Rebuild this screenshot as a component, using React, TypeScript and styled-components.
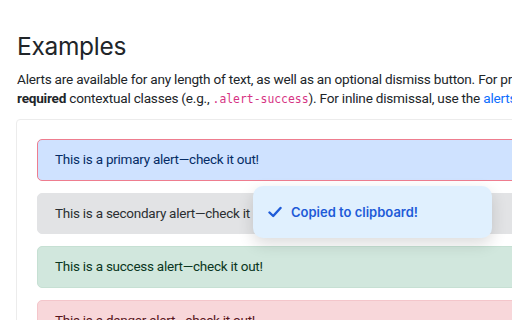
import React from 'react';
import styled, { createGlobalStyle } from 'styled-components';

const Global = createGlobalStyle`
  html, body {
    margin: 0;
    padding: 0;
    background: #ffffff;
    overflow: hidden;
    width: 512px;
    height: 320px;
  }
  body {
    font-family: Roboto, "Liberation Sans", sans-serif;
    color: #212529;
  }
`;

const Page = styled.div({
    width: '760px',
    padding: '30px 0 0 17px',
    boxSizing: 'border-box',
});

const Title = styled.h2({
    fontFamily: 'Inter, Roboto, sans-serif',
    fontSize: '24.5px',
    fontWeight: 400,
    lineHeight: '32px',
    margin: '0 0 8px 0',
    letterSpacing: '-0.3px',
});

const Lead = styled.p({
    fontSize: '13.6px',
    letterSpacing: '-0.22px',
    lineHeight: '19px',
    margin: '0 0 10px 0',
});

const Line = styled.span({
    display: 'block',
    whiteSpace: 'nowrap',
});

const Code = styled.code({
    fontFamily: '"DejaVu Sans Mono", "Liberation Mono", monospace',
    fontSize: '11.4px',
    letterSpacing: '0',
    color: '#d63384',
});

const Link = styled.a({
    color: '#0d6efd',
    textDecoration: 'none',
});

const Example = styled.div({
    marginLeft: '-1px',
    border: '1px solid #ececec',
    borderRadius: '4px',
    padding: '19px 20px',
    display: 'flex',
    flexDirection: 'column',
    gap: '12px',
    position: 'relative',
});

const tones = {
    primary: { bg: '#cfe2ff', fg: '#052c65', border: '#ee7d8f' },
    secondary: { bg: '#e2e3e5', fg: '#2b2f32', border: '#e2e3e5' },
    success: { bg: '#d1e7dd', fg: '#0a3622', border: '#c6e0d3' },
    danger: { bg: '#f8d7da', fg: '#58151c', border: '#f4c6cb' },
};

type Tone = keyof typeof tones;

const Alert = styled.div<{ $tone: Tone }>`
    background: ${p => tones[p.$tone].bg};
    color: ${p => tones[p.$tone].fg};
    border: 1px solid ${p => tones[p.$tone].border};
    border-radius: 5px;
    padding: 12px 17px;
    font-size: 13.5px;
    letter-spacing: -0.25px;
    line-height: 15.5px;
`;

const Toast = styled.div({
    position: 'absolute',
    left: '236px',
    top: '66px',
    width: '239px',
    height: '52px',
    boxSizing: 'border-box',
    background: '#e0f0fe',
    borderRadius: '10px',
    boxShadow: '0 6px 16px rgba(0, 0, 0, 0.14)',
    display: 'flex',
    alignItems: 'center',
    gap: '9px',
    padding: '0 15px',
    color: '#1e5bd8',
    fontFamily: 'Inter, Roboto, sans-serif',
    fontSize: '13px',
    fontWeight: 600,
});

const Check = () => (
    <svg width="14" height="14" viewBox="0 0 14 14" fill="none">
        <path d="M1.5 7.5 L5.2 11 L12.5 3" stroke="#1e5bd8" strokeWidth="2.4" strokeLinecap="round" strokeLinejoin="round" />
    </svg>
);

const App: React.FC = () => {
  return (
    <Page>
        <Global />
        <Title>Examples</Title>
        <Lead>
            <Line>Alerts are available for any length of text, as well as an optional dismiss button. For proper styling, use one of the eight</Line>
            <Line><strong>required</strong> contextual classes (e.g., <Code>.alert-success</Code>). For inline dismissal, use the <Link href="#">alerts JavaScript plugin</Link>.</Line>
        </Lead>
        <Example>
            <Alert $tone="primary">This is a primary alert—check it out!</Alert>
            <Alert $tone="secondary">This is a secondary alert—check it out!</Alert>
            <Alert $tone="success">This is a success alert—check it out!</Alert>
            <Alert $tone="danger">This is a danger alert—check it out!</Alert>
            <Toast>
                <Check />
                Copied to clipboard!
            </Toast>
        </Example>
    </Page>
  );
};

export default App;
